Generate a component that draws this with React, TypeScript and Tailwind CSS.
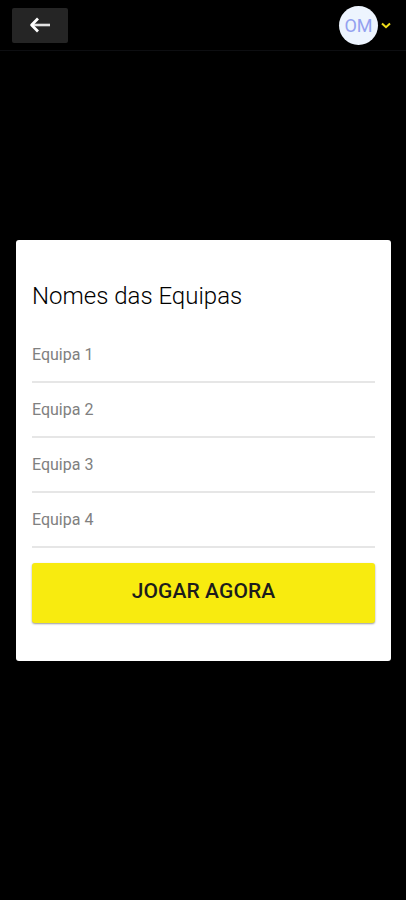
import React, { useState } from 'react';

const TEAM_COUNT = 4;

function BackIcon() {
  return (
    <svg width="22" height="16" viewBox="0 0 22 16" fill="none" stroke="#fff" strokeLinejoin="round">
      <path d="M3 8h18" stroke="#e2e2e2" strokeWidth="2.6" />
      <path d="M9 1.6 2.6 8 9 14.4" strokeWidth="2.8" />
    </svg>
  );
}

function ChevronIcon() {
  return (
    <svg width="10" height="7" viewBox="0 0 10 7" fill="none" stroke="#eedd1a" strokeWidth="2">
      <path d="M1 1.4 5 5.2 9 1.4" />
    </svg>
  );
}

function TopBar({ initials }: { initials: string }) {
  return (
    <header className="flex h-[51px] items-center justify-between border-b border-[#0d0e11] pl-3 pr-[15px]">
      <button type="button" aria-label="Voltar" className="flex h-[35px] w-14 items-center justify-center rounded-xs bg-[#252525]">
        <BackIcon />
      </button>
      <button type="button" className="flex items-center gap-[3px]">
        <span className="flex size-[39px] items-center justify-center rounded-full bg-[#edf4fe] pt-0.5 text-[18px] leading-none text-[#93a1f0]">
          {initials}
        </span>
        <ChevronIcon />
      </button>
    </header>
  );
}

interface TeamFieldProps {
  index: number;
  value: string;
  onChange: (value: string) => void;
}

function TeamField({ index, value, onChange }: TeamFieldProps) {
  return (
    <input
      value={value}
      placeholder={`Equipa ${index + 1}`}
      onChange={e => onChange(e.target.value)}
      className="block h-[55px] w-full border-b-2 border-[#e6e6e6] text-[16px] text-[#222] outline-none placeholder:text-[#808080]"
    />
  );
}

export default function App() {
  const [names, setNames] = useState<string[]>(Array(TEAM_COUNT).fill(''));

  const rename = (index: number, value: string) => setNames(names.map((n, i) => (i === index ? value : n)));

  return (
    <div className="flex h-screen flex-col bg-black font-[Roboto,sans-serif]">
      <TopBar initials="OM" />
      <main className="flex flex-1 items-center pb-[50px] pl-4 pr-[15px]">
        <form className="h-[421px] w-full rounded-[3px] bg-white px-4 pt-10">
          <h1 className="mb-4 text-[24px] leading-[32px] font-light text-black">Nomes das Equipas</h1>
          {names.map((name, i) => (
            <TeamField key={i} index={i} value={name} onChange={v => rename(i, v)} />
          ))}
          <button type="button" className="mt-[15px] h-[60px] w-full rounded-[3px] bg-[#f8eb0f] pb-[3px] text-[21px] font-medium tracking-[0.1px] text-[#1c1c1c] shadow-[0_1px_2px_rgba(0,0,0,0.4)]">
            JOGAR AGORA
          </button>
        </form>
      </main>
    </div>
  );
}
